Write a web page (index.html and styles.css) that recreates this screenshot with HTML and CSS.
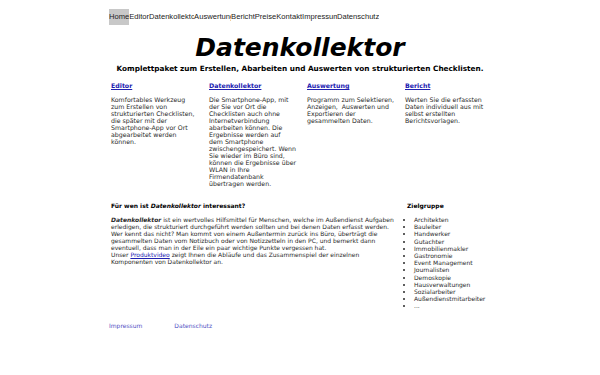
FILE: index.html
```html
<!DOCTYPE html>
<html lang="de">
<head>
<meta charset="utf-8">
<title>Datenkollektor</title>
<link rel="stylesheet" href="styles.css">
</head>
<body>
<div class="page">
  <nav class="nav">
    <a class="nav-item active" href="#">Home</a>
    <a class="nav-item" href="#">Editor</a>
    <a class="nav-item w-dk" href="#">Datenkollektor</a>
    <a class="nav-item w-aw" href="#">Auswertung</a>
    <a class="nav-item" href="#">Bericht</a>
    <a class="nav-item" href="#">Preise</a>
    <a class="nav-item" href="#">Kontakt</a>
    <a class="nav-item w-im" href="#">Impressum</a>
    <a class="nav-item" href="#">Datenschutz</a>
  </nav>

  <h1 class="title">Datenkollektor</h1>
  <p class="subtitle">Komplettpaket zum Erstellen, Abarbeiten und Auswerten von strukturierten Checklisten.</p>

  <div class="features">
    <div class="feature">
      <a class="feature-head" href="#">Editor</a>
      <p>Komfortables Werkzeug<br>zum Erstellen von strukturierten Checklisten, die später mit der Smartphone-App vor Ort abgearbeitet werden können.</p>
    </div>
    <div class="feature">
      <a class="feature-head" href="#">Datenkollektor</a>
      <p>Die Smartphone-App, mit der Sie vor Ort die Checklisten auch ohne Internetverbindung abarbeiten können. Die Ergebnisse werden auf<br>dem Smartphone zwischengespeichert. Wenn Sie wieder im Büro sind, können die Ergebnisse über WLAN in Ihre Firmendatenbank übertragen werden.</p>
    </div>
    <div class="feature">
      <a class="feature-head" href="#">Auswertung</a>
      <p>Programm zum Selektieren, Anzeigen,&nbsp; Auswerten und Exportieren der gesammelten Daten.</p>
    </div>
    <div class="feature">
      <a class="feature-head" href="#">Bericht</a>
      <p>Werten Sie die erfassten Daten individuell aus mit selbst erstellten Berichtsvorlagen.</p>
    </div>
  </div>

  <div class="info">
    <div class="info-main">
      <h2 class="info-head">Für wen ist <em>Datenkollektor</em> interessant?</h2>
      <p><strong><em>Datenkollektor</em></strong> ist ein wertvolles Hilfsmittel für Menschen, welche im Außendienst Aufgaben erledigen, die strukturiert durchgeführt werden sollten und bei denen Daten erfasst werden. Wer kennt das nicht? Man kommt von einem Außentermin zurück ins Büro, überträgt die gesammelten Daten vom Notizbuch oder von Notizzetteln in den PC, und bemerkt dann eventuell, dass man in der Eile ein paar wichtige Punkte vergessen hat.<br>Unser <a href="#">Produktvideo</a> zeigt Ihnen die Abläufe und das Zusammenspiel der einzelnen Komponenten von Datenkollektor an.</p>
    </div>
    <div class="info-side">
      <h2 class="info-head">Zielgruppe</h2>
      <ul class="targets">
        <li>Architekten</li>
        <li>Bauleiter</li>
        <li>Handwerker</li>
        <li>Gutachter</li>
        <li>Immobilienmakler</li>
        <li>Gastronomie</li>
        <li>Event Management</li>
        <li>Journalisten</li>
        <li>Demoskopie</li>
        <li>Hausverwaltungen</li>
        <li>Sozialarbeiter</li>
        <li>Außendienstmitarbeiter</li>
        <li>...</li>
      </ul>
    </div>
  </div>

  <footer class="footer">
    <a href="#">Impressum</a>
    <a href="#">Datenschutz</a>
  </footer>
</div>
</body>
</html>
```

FILE: styles.css
```css
html, body {
  margin: 0;
  padding: 0;
  background: #fff;
}
body {
  font-family: "DejaVu Sans", sans-serif;
  font-size: 6px;
  color: #2a2a2a;
}
.page {
  width: 382px;
  margin: 0 auto;
}
.nav {
  display: flex;
  padding-top: 9px;
}
.nav-item {
  font-family: "Liberation Sans", Arial, sans-serif;
  font-size: 7.6px;
  line-height: 16px;
  height: 16px;
  color: #222;
  text-decoration: none;
  white-space: nowrap;
  overflow: hidden;
}
.nav-item.active {
  background: #c8c8c8;
}
.w-dk { width: 45px; }
.w-aw { width: 37px; }
.w-im { width: 35px; }
.title {
  margin: 9px 0 0;
  text-align: center;
  font-size: 25px;
  line-height: 28px;
  font-weight: bold;
  font-style: italic;
  color: #000;
}
.subtitle {
  margin: 2px 0 0;
  text-align: center;
  font-weight: bold;
  font-size: 7.3px;
  color: #000;
}
.features {
  display: grid;
  grid-template-columns: repeat(4, 88px);
  column-gap: 10px;
  margin-top: 9px;
  padding-left: 2px;
  font-size: 6.25px;
}
.feature-head {
  font-weight: bold;
  color: #2020b0;
  line-height: 7px;
  text-decoration-thickness: 1px;
}
.feature p {
  margin: 7px 0 0;
  line-height: 7px;
}
.info {
  display: flex;
  margin-top: 15px;
  padding-left: 2px;
}
.info-main {
  width: 284px;
}
.info-side {
  margin-left: 12px;
}
.info-head {
  font-size: 6px;
  line-height: 7px;
  font-weight: bold;
  margin: 0 0 7px;
  color: #000;
}
.info-main p {
  margin: 0;
  line-height: 7px;
}
.info-main a {
  color: #2020b0;
  text-decoration-thickness: 1px;
}
.targets {
  margin: 0;
  padding-left: 7px;
  line-height: 7.2px;
}
.footer {
  display: flex;
  gap: 32px;
  margin-top: 12px;
  padding-left: 0;
}
.footer a {
  color: #5050c4;
  text-decoration: underline;
  text-decoration-thickness: 1px;
  text-underline-offset: 1px;
}
```
